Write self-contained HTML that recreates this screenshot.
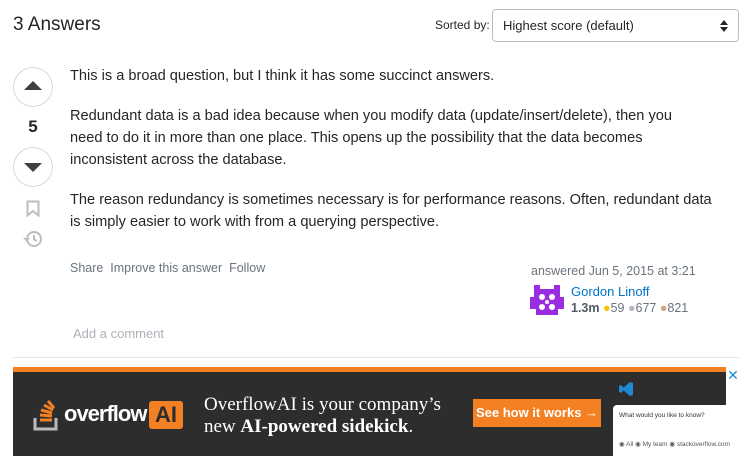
<!DOCTYPE html>
<html><head><style>
body{margin:0;width:744px;height:463px;overflow:hidden;background:#fff;font-family:"Liberation Sans",sans-serif;color:#232629;position:relative}
.a{position:absolute}
p{margin:0}
.t{left:70px;font-size:14.6px;line-height:22px;white-space:nowrap}
.circ{width:38px;height:38px;border:1px solid #d6d9dc;border-radius:50%;left:13px}
.gray{color:#6a737c}
</style></head><body>
<div class="a" style="left:13px;top:14px;font-size:19px">3 Answers</div>
<div class="a" style="left:435px;top:18px;font-size:12px">Sorted by:</div>
<div class="a" style="left:492px;top:9px;width:245px;height:31px;border:1px solid #babfc4;border-radius:4px;font-size:13px;line-height:31px;text-indent:10px">Highest score (default)
<svg class="a" style="right:10px;top:10px" width="8" height="12"><path d="M0 5L4 0L8 5Z M0 7L4 12L8 7Z" fill="#232629"/></svg></div>

<div class="a circ" style="top:67px"><svg class="a" style="left:10px;top:13px" width="18" height="10"><path d="M0 9L9 0L18 9Z" fill="#3b4045"/></svg></div>
<div class="a" style="left:13px;width:40px;text-align:center;top:117px;font-size:17px;font-weight:bold">5</div>
<div class="a circ" style="top:147px"><svg class="a" style="left:10px;top:15px" width="18" height="10"><path d="M0 0L9 9L18 0Z" fill="#3b4045"/></svg></div>
<svg class="a" style="left:26px;top:200px" width="14" height="17"><path d="M1.5 1.5H12.5V15.5L7 11L1.5 15.5Z" fill="none" stroke="#babfc4" stroke-width="2"/></svg>
<svg class="a" style="left:23px;top:230px" width="20" height="18"><circle cx="11" cy="9" r="7" fill="none" stroke="#babfc4" stroke-width="2"/><path d="M11 5V9.5L14 11" stroke="#babfc4" stroke-width="2" fill="none"/><path d="M0 8L4 12L7 8Z" fill="#babfc4"/></svg>

<p class="a t" style="top:65px">This is a broad question, but I think it has some succinct answers.</p>
<p class="a t" style="top:105px">Redundant data is a bad idea because when you modify data (update/insert/delete), then you<br>need to do it in more than one place. This opens up the possibility that the data becomes<br>inconsistent across the database.</p>
<p class="a t" style="top:189px">The reason redundancy is sometimes necessary is for performance reasons. Often, redundant data<br>is simply easier to work with from a querying perspective.</p>

<div class="a gray" style="left:70px;top:261px;font-size:12.5px">Share&nbsp; Improve this answer&nbsp; Follow</div>
<div class="a gray" style="left:531px;top:264px;font-size:12.5px">answered Jun 5, 2015 at 3:21</div>
<svg class="a" style="left:530px;top:283px" width="34" height="34"><rect width="34" height="34" fill="#fff"/><path d="M4 2H10V6H24V2H30V14H34V26H28V32H6V26H0V14H4Z" fill="#9b2de0"/><g fill="#fff"><circle cx="12" cy="14" r="3"/><circle cx="22" cy="14" r="3"/><circle cx="12" cy="24" r="3"/><circle cx="22" cy="24" r="3"/><circle cx="17" cy="19" r="2"/></g></svg>
<div class="a" style="left:571px;top:284px;font-size:13px;color:#0074cc">Gordon Linoff</div>
<div class="a" style="left:571px;top:301px;font-size:12.5px;color:#6a737c"><b style="color:#525960">1.3m</b> <span style="color:#f5c400">●</span>59 <span style="color:#b4b8bc">●</span>677 <span style="color:#d1a684">●</span>821</div>
<div class="a" style="left:73px;top:326px;font-size:13px;color:#acb2b8">Add a comment</div>
<div class="a" style="left:13px;top:357px;width:726px;height:1px;background:#e3e6e8"></div>

<div class="a" style="left:13px;top:367px;width:713px;height:5px;background:#f48024"></div>
<div class="a" style="left:13px;top:372px;width:713px;height:84px;background:#2d2d2d"></div>
<div class="a" style="left:726px;top:367px;width:14px;height:16px;background:#fff;color:#1a8fd8;font-size:14px;line-height:16px;text-align:center">✕</div>
<svg class="a" style="left:32px;top:398px" width="30" height="34"><g stroke="#f48024" stroke-width="3"><path d="M8 22H20M8 17L20 18M9 12L20 15M12 7L21 12M16 3L22 10"/></g><path d="M3 20V31H24V20" stroke="#bcbbbb" stroke-width="3" fill="none"/></svg>
<div class="a" style="left:64px;top:401px;color:#fff;font-size:22px;font-weight:bold;letter-spacing:-1px">overflow</div>
<div class="a" style="left:149px;top:401px;width:34px;height:28px;background:#f48024;border-radius:3px;color:#2d2d2d;font-size:22px;font-weight:bold;text-align:center;line-height:28px">AI</div>
<div class="a" style="left:204px;top:394px;color:#fff;font-family:'Liberation Serif',serif;font-size:19px;line-height:22px">OverflowAI is your company’s<br>new <b>AI-powered sidekick</b>.</div>
<div class="a" style="left:473px;top:399px;width:128px;height:28px;background:#f48024;color:#fff;font-size:13px;font-weight:bold;line-height:28px;text-align:center">See how it works →</div>
<svg class="a" style="left:618px;top:381px" width="16" height="16"><path d="M12 1L15 2V14L12 15L4 8Z M1 5L3 4L7 8L3 12L1 11Z" fill="#1f8ad2"/></svg>
<div class="a" style="left:613px;top:405px;width:127px;height:51px;background:#fff;border-radius:4px 0 0 0;font-size:6.5px;color:#333">
<div style="position:absolute;left:6px;top:7px">What would you like to know?</div>
<div style="position:absolute;left:6px;top:35px;color:#555">◉ All ◉ My team ◉ stackoverflow.com</div></div>
</body></html>
